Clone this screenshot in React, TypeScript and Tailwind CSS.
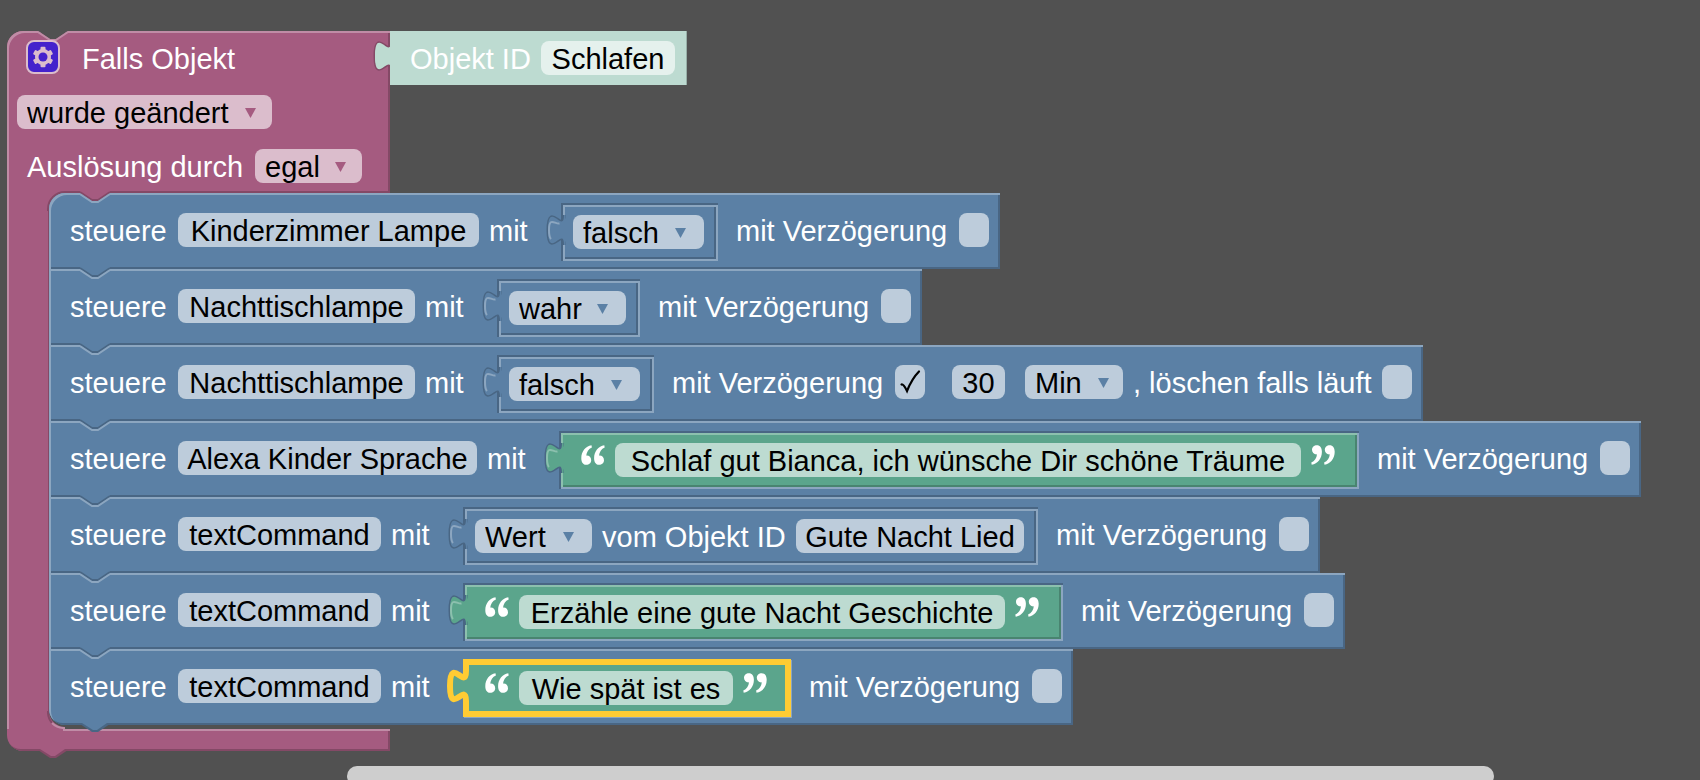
import React from 'react';
import { clsx } from 'clsx';

type Tone = 'pink' | 'blue' | 'green' | 'mint';

const BODY: Record<Tone, string> = {
  pink: '#a55b80',
  blue: '#5b80a5',
  green: '#5ba58c',
  mint: '#bddbd1',
};

const LIGHT: Record<Tone, string> = {
  pink: '#c08ca6',
  blue: '#8ca6c0',
  green: '#8cc0ae',
  mint: '#bddbd1',
};

const DARK: Record<Tone, string> = {
  pink: '#844966',
  blue: '#496684',
  green: '#498470',
  mint: '#97afa7',
};

const PILL: Record<Tone, string> = {
  pink: 'bg-[#dbbdcc]',
  blue: 'bg-[#bdccdb]',
  green: 'bg-[#bddbd1]',
  mint: 'bg-[#e5f1ed]',
};

const VALUE_BODY: Record<Tone, string> = {
  pink: 'bg-[#a55b80]',
  blue: 'bg-[#5b80a5] shadow-[inset_2px_2px_0_#8ca6c0,inset_-2px_-2px_0_#496684]',
  green: 'bg-[#5ba58c] shadow-[inset_2px_2px_0_#8cc0ae,inset_-2px_-2px_0_#498470]',
  mint: 'bg-[#bddbd1] shadow-[inset_-1px_0_0_#97afa7]',
};

function Label({ children, className }: { children: React.ReactNode; className?: string }) {
  return <span className={clsx('shrink-0 whitespace-nowrap text-white', className)}>{children}</span>;
}

function Dropdown({ label, value, options, tone, width, arrow = 'right-4' }: {
  label: string;
  value: string;
  options: string[];
  tone: Tone;
  width: string;
  arrow?: string;
}) {
  return (
    <span className={clsx('relative block h-[34px] shrink-0', width)}>
      <select
        aria-label={label}
        defaultValue={value}
        className={clsx('block h-[34px] w-full appearance-none rounded-lg pl-2.5 pt-0.5 leading-[32px] text-black outline-none', PILL[tone])}
      >
        {options.map((option) => (
          <option key={option}>{option}</option>
        ))}
      </select>
      <svg className={clsx('pointer-events-none absolute top-[13px]', arrow)} width="11" height="10" viewBox="0 0 11 10">
        <path d="M0 0H11L5.5 10Z" fill={BODY[tone]} />
      </svg>
    </span>
  );
}

function ObjectField({ children, tone, width }: { children: string; tone: Tone; width: string }) {
  return (
    <button
      type="button"
      className={clsx('h-[34px] shrink-0 whitespace-nowrap rounded-lg pt-0.5 text-center leading-[32px] text-black', PILL[tone], width)}
    >
      {children}
    </button>
  );
}

function TextField({ label, value, tone, width }: { label: string; value: string; tone: Tone; width: string }) {
  return (
    <input
      type="text"
      aria-label={label}
      defaultValue={value}
      className={clsx('h-[34px] shrink-0 rounded-lg pt-0.5 text-center leading-[32px] text-black outline-none', PILL[tone], width)}
    />
  );
}

function CheckField({ text, width, checked = false }: { text: string; width: string; checked?: boolean }) {
  return (
    <label className="mt-2.5 flex shrink-0 gap-2.5">
      <Label className={width}>{text}</Label>
      <span className="relative block h-[34px] w-[30px]">
        <input type="checkbox" defaultChecked={checked} className="peer block h-[34px] w-[30px] appearance-none rounded-lg bg-[#bdccdb]" />
        <svg className="pointer-events-none absolute inset-0 hidden peer-checked:block" width="30" height="34" viewBox="0 0 30 34">
          <path d="M6.5 19.5C8 19 9.5 21 12 26C15 18.500 19 11.500 24 6.500" fill="none" stroke="#000" strokeWidth="2.2" strokeLinecap="round" />
        </svg>
      </span>
    </label>
  );
}

// Quotation mark drawing, flipped for the closing one
function Quote({ closing = false }: { closing?: boolean }) {
  return (
    <svg className={clsx('shrink-0', closing && 'rotate-180')} width="24" height="24" viewBox="0 0 24 24" fill="#fff">
      <path d="M10.500 2.200C4.500 3.200 0.300 8.500 0.300 15.200C0.300 19.300 2.200 21.800 5.300 21.800C8.100 21.800 10.200 19.900 10.200 17.200C10.200 14.500 8.300 12.600 5.800 12.600C5.600 12.600 5.400 12.600 5.200 12.700C5.500 9 7.600 5.800 10.900 4.400Z" />
      <path d="M23.300 2.200C17.300 3.200 13.100 8.500 13.100 15.200C13.100 19.300 15 21.800 18.100 21.800C20.900 21.800 23 19.900 23 17.200C23 14.500 21.100 12.600 18.600 12.600C18.400 12.600 18.200 12.600 18 12.700C18.300 9 20.400 5.800 23.700 4.400Z" />
    </svg>
  );
}

// Puzzle tab on the left side of a value block
function Tab({ tone, socket, selected = false }: { tone: Tone; socket: Tone; selected?: boolean }) {
  const outline = 'M0 10C0 30 -16 -6 -16 25S0 20 0 40';
  return (
    <svg className="pointer-events-none absolute -left-5 top-1.5" width="26" height="40" viewBox="-21 6 26 40">
      {!selected && <path d={outline} fill="none" stroke={DARK[socket]} strokeWidth="3" />}
      <path d={`${outline}H${selected ? 3 : 1}V10Z`} fill={BODY[tone]} />
      {tone === 'mint' && <path d="M-1 8H4V42H-1Z" fill={BODY.mint} />}
      {!selected && <path d="M-4.500 18.500C-9 19.500 -15 11 -15 25Q-15 32 -13 34" fill="none" stroke={LIGHT[tone]} strokeWidth="2" />}
      {selected && <path d={outline} fill="none" stroke="#fc3" strokeWidth="6" strokeLinecap="square" />}
    </svg>
  );
}

function ValueBlock({ tone, padding, selected = false, children }: {
  tone: Tone;
  padding: string;
  selected?: boolean;
  children: React.ReactNode;
}) {
  return (
    <div
      className={clsx(
        'ml-[23px] mr-2 shrink-0 p-0.5',
        selected
          ? 'bg-[#fc3] shadow-[1px_1px_0_#8ca6c0]'
          : 'shadow-[inset_2px_2px_0_#496684,inset_-2px_-2px_0_#8ca6c0]',
      )}
    >
      <div
        className={clsx(
          'relative flex h-[54px] gap-2.5 pt-2.5',
          padding,
          selected ? 'bg-[#5ba58c] shadow-[inset_0_0_0_4px_#fc3]' : VALUE_BODY[tone],
        )}
      >
        <Tab tone={tone} socket="blue" selected={selected} />
        {children}
      </div>
    </div>
  );
}

function LogicValue({ value, width }: { value: string; width: string }) {
  return (
    <ValueBlock tone="blue" padding="pl-2.5 pr-3">
      <Dropdown label="Wahrheitswert" value={value} options={['wahr', 'falsch']} tone="blue" width={width} arrow="right-[18px]" />
    </ValueBlock>
  );
}

function TextValue({ value, width, selected }: { value: string; width: string; selected?: boolean }) {
  return (
    <ValueBlock tone="green" padding="pl-5 pr-[22px]" selected={selected}>
      <Quote />
      <TextField label="Text" value={value} tone="green" width={width} />
      <Quote closing />
    </ValueBlock>
  );
}

// Notch in the top edge, filled with the colour of whatever sits above
function Notch({ above, edge, line }: { above: string; edge: string; line?: string }) {
  return (
    <svg className="pointer-events-none absolute left-[31px] -top-0.5" width="32" height="14" viewBox="0 -2 32 14">
      <path d="M0 -2H30V0L18 8H12L0 0Z" fill={above} />
      {line && <path d="M0 -1L12 7H18L30 -1" fill="none" stroke={line} strokeWidth="2" />}
      <path d="M0 1L12 9H18L30 1" fill="none" stroke={edge} strokeWidth="2" />
    </svg>
  );
}

function BottomNotch({ tone }: { tone: Tone }) {
  return (
    <svg className="pointer-events-none absolute left-[31px] top-full -mt-0.5" width="32" height="10" viewBox="0 0 32 10">
      <path d="M0 0H30V1L18 9H12L0 1Z" fill={DARK[tone]} />
      <path d="M2 0H27L17 7H13Z" fill={BODY[tone]} />
    </svg>
  );
}

interface ControlProps {
  target: string;
  targetWidth: string;
  position?: 'first' | 'last';
  delay?: boolean;
  children: React.ReactNode;
}

function ControlBlock({ target, targetWidth, position, delay = false, children }: ControlProps) {
  const first = position === 'first';
  return (
    <div
      className={clsx(
        'relative flex h-[76px] w-fit items-start gap-2.5 bg-[#5b80a5] pl-[21px] pr-[11px] pt-2.5 shadow-[inset_2px_2px_0_#8ca6c0,inset_-2px_-2px_0_#496684]',
        first && 'rounded-tl-2xl',
        position === 'last' && 'rounded-bl-2xl',
      )}
    >
      <Notch above={first ? BODY.pink : BODY.blue} line={first ? DARK.pink : DARK.blue} edge={LIGHT.blue} />
      {position === 'last' && <BottomNotch tone="blue" />}
      <div className="mt-2.5 flex gap-2.5">
        <Label className="w-[98px]">steuere</Label>
        <ObjectField tone="blue" width={targetWidth}>{target}</ObjectField>
        <Label className="w-[39px]">mit</Label>
      </div>
      {children}
      <CheckField text="mit Verzögerung" width="w-[213px]" checked={delay} />
      {delay && (
        <>
          <div className="ml-[17px] mt-2.5 flex gap-5">
            <TextField label="Verzögerung" value="30" tone="blue" width="w-[53px]" />
            <Dropdown label="Einheit" value="Min" options={['ms', 'Sek', 'Min']} tone="blue" width="w-[98px]" arrow="right-3.5" />
          </div>
          <CheckField text=", löschen falls läuft" width="w-[239px]" />
        </>
      )}
    </div>
  );
}

function GearIcon() {
  return (
    <button type="button" aria-label="Einstellungen" className="-mt-px h-[34px] w-[34px] shrink-0 rounded-lg border-2 border-[#dbbdcc] bg-[#4422cc]">
      <svg width="30" height="30" viewBox="-15 -15 30 30">
        <g fill="#dbbdcc">
          <circle r="8" />
          <rect x="-2.500" y="-10.300" width="5" height="20.600" rx="1" />
          <rect x="-2.500" y="-10.300" width="5" height="20.600" rx="1" transform="rotate(60)" />
          <rect x="-2.500" y="-10.300" width="5" height="20.600" rx="1" transform="rotate(120)" />
        </g>
        <circle r="4.500" fill="#4422cc" />
      </svg>
    </button>
  );
}

function TriggerHead() {
  return (
    <div className="flex items-start">
      <div className="relative flex h-[162px] w-[383px] shrink-0 flex-col rounded-tl-2xl bg-[#a55b80] pt-2.5 shadow-[inset_2px_2px_0_#c08ca6,inset_-2px_0_0_#844966]">
        <Notch above="#515151" edge={LIGHT.pink} />
        <div className="relative flex h-[54px] items-start gap-[22px] pl-[19px]">
          <GearIcon />
          <Label>Falls Objekt</Label>
        </div>
        <div className="flex h-[54px] pl-2.5">
          <Dropdown label="Bedingung" value="wurde geändert" options={['wurde geändert', 'wurde aktualisiert']} tone="pink" width="w-[255px]" />
        </div>
        <div className="flex h-[34px] pl-5">
          <Label className="w-[228px]">Auslösung durch</Label>
          <Dropdown label="Auslösung durch" value="egal" options={['egal', 'Skript', 'Nutzer']} tone="pink" width="w-[107px]" />
        </div>
        <div className="ml-14 mt-auto h-0.5 bg-[#844966]" />
      </div>
      <div className="relative flex h-[54px] gap-2.5 bg-[#bddbd1] pl-5 pr-3 pt-2.5 shadow-[inset_-1px_0_0_#97afa7]">
        <Tab tone="mint" socket="pink" />
        <Label className="w-[121px]">Objekt ID</Label>
        <div>
          <ObjectField tone="mint" width="w-[134px]">Schlafen</ObjectField>
        </div>
      </div>
    </div>
  );
}

export default function App() {
  return (
    <main className="h-screen overflow-hidden bg-[#515151] pt-[31px] font-['Liberation_Sans',Arial,sans-serif] text-[29px] leading-[36px]">
      <div className="pl-[7px]">
        <TriggerHead />

        <div className="flex">
          <div className="relative w-[42px] shrink-0 bg-[#a55b80] shadow-[inset_2px_0_0_#c08ca6,inset_-1px_0_0_#844966]">
            <svg className="absolute -right-[18px] -top-0.5" width="20" height="20" viewBox="0 0 20 20">
              <path d="M0 0H20V2L2 20H0Z" fill={BODY.pink} />
              <path d="M1 20V18A17 17 0 0 1 18 1H20" fill="none" stroke={DARK.pink} strokeWidth="2" />
            </svg>
            <svg className="absolute -right-4 bottom-0" width="18" height="18" viewBox="0 0 18 18">
              <path d="M0 0H2A16 16 0 0 0 18 16V18H0Z" fill={BODY.pink} />
              <path d="M1 0A17 17 0 0 0 5 12" fill="none" stroke={DARK.pink} strokeWidth="2" />
              <path d="M5 12A17 17 0 0 0 18 17" fill="none" stroke={LIGHT.pink} strokeWidth="2" />
            </svg>
          </div>

          <div className="relative z-10 pb-1">
            <ControlBlock target="Kinderzimmer Lampe" targetWidth="w-[301px]" position="first">
              <LogicValue value="falsch" width="w-[131px]" />
            </ControlBlock>
            <ControlBlock target="Nachttischlampe" targetWidth="w-[237px]">
              <LogicValue value="wahr" width="w-[117px]" />
            </ControlBlock>
            <ControlBlock target="Nachttischlampe" targetWidth="w-[237px]" delay>
              <LogicValue value="falsch" width="w-[131px]" />
            </ControlBlock>
            <ControlBlock target="Alexa Kinder Sprache" targetWidth="w-[299px]">
              <TextValue value="Schlaf gut Bianca, ich wünsche Dir schöne Träume" width="w-[686px]" />
            </ControlBlock>
            <ControlBlock target="textCommand" targetWidth="w-[203px]">
              <ValueBlock tone="blue" padding="pl-2.5 pr-3">
                <Dropdown label="Attribut" value="Wert" options={['Wert', 'Zeitstempel']} tone="blue" width="w-[117px]" arrow="right-[18px]" />
                <Label className="w-[184px]">vom Objekt ID</Label>
                <div>
                  <ObjectField tone="blue" width="w-[228px]">Gute Nacht Lied</ObjectField>
                </div>
              </ValueBlock>
            </ControlBlock>
            <ControlBlock target="textCommand" targetWidth="w-[203px]">
              <TextValue value="Erzähle eine gute Nacht Geschichte" width="w-[486px]" />
            </ControlBlock>
            <ControlBlock target="textCommand" targetWidth="w-[203px]" position="last">
              <TextValue value="Wie spät ist es" width="w-[214px]" selected />
            </ControlBlock>
          </div>
        </div>

        <div className="relative h-[22px] w-[383px] rounded-bl-2xl bg-[#a55b80] shadow-[inset_-2px_-2px_0_#844966]">
          <div className="ml-14 h-0.5 bg-[#c08ca6]" />
          <BottomNotch tone="pink" />
        </div>
      </div>

      <div className="ml-[20.4%] mt-[15px] h-5 w-[67.5%] rounded-[10px] bg-[#cecece]" />
    </main>
  );
}
